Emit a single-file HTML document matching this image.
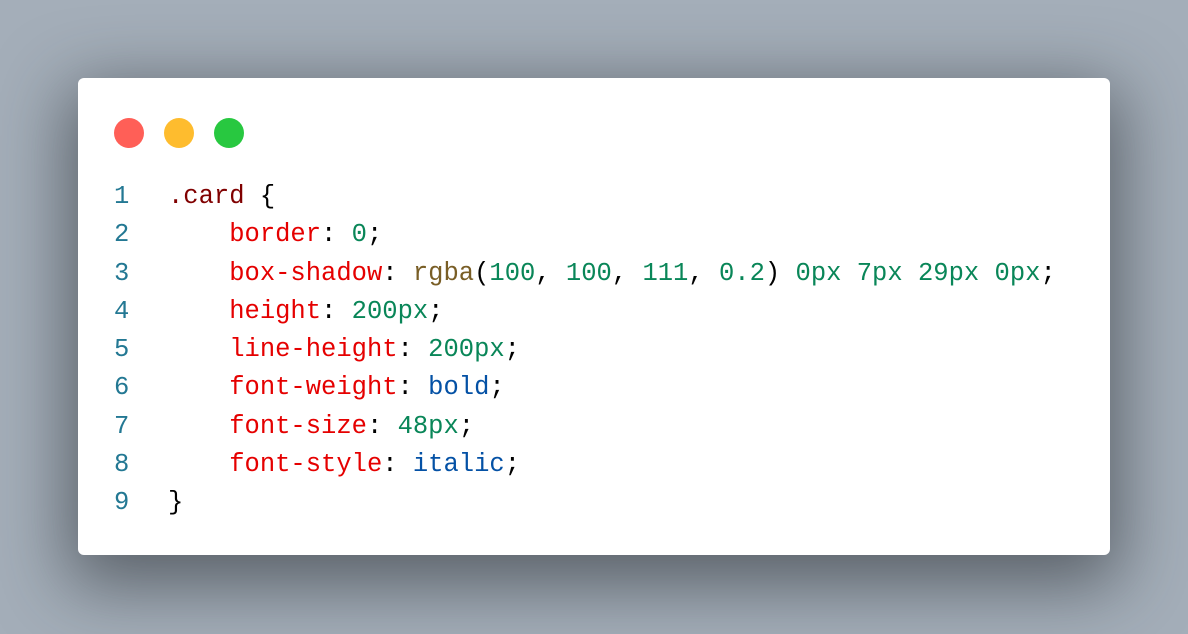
<!DOCTYPE html>
<html><head><style>
html,body{margin:0;padding:0;width:1188px;height:634px;overflow:hidden;background:#a4aeb9;}
.card{position:absolute;left:78px;top:78px;width:1032px;height:477px;background:#fff;border-radius:6px;box-shadow:0 20px 70px 10px rgba(40,45,50,0.6);}
.dot{position:absolute;top:40px;width:30px;height:30px;border-radius:50%;}
pre{position:absolute;left:36px;top:100px;margin:0;font-family:"Liberation Mono","DejaVu Sans Mono",monospace;font-size:25.5px;line-height:38.3px;color:#000;}
.n{color:#237893;display:inline-block;width:54px;}
.s{color:#800000}.p{color:#e50000}.v{color:#098658}.f{color:#795e26}.k{color:#0451a5}
</style></head><body>
<div class="card">
<div class="dot" style="left:36px;background:#ff5f57"></div>
<div class="dot" style="left:86px;background:#febc2e"></div>
<div class="dot" style="left:136px;background:#28c840"></div>
<pre><span class="n">1</span><span class="s">.card</span> {
<span class="n">2</span>    <span class="p">border</span>: <span class="v">0</span>;
<span class="n">3</span>    <span class="p">box-shadow</span>: <span class="f">rgba</span>(<span class="v">100</span>, <span class="v">100</span>, <span class="v">111</span>, <span class="v">0.2</span>) <span class="v">0px</span> <span class="v">7px</span> <span class="v">29px</span> <span class="v">0px</span>;
<span class="n">4</span>    <span class="p">height</span>: <span class="v">200px</span>;
<span class="n">5</span>    <span class="p">line-height</span>: <span class="v">200px</span>;
<span class="n">6</span>    <span class="p">font-weight</span>: <span class="k">bold</span>;
<span class="n">7</span>    <span class="p">font-size</span>: <span class="v">48px</span>;
<span class="n">8</span>    <span class="p">font-style</span>: <span class="k">italic</span>;
<span class="n">9</span>}</pre>
</div>
</body></html>
